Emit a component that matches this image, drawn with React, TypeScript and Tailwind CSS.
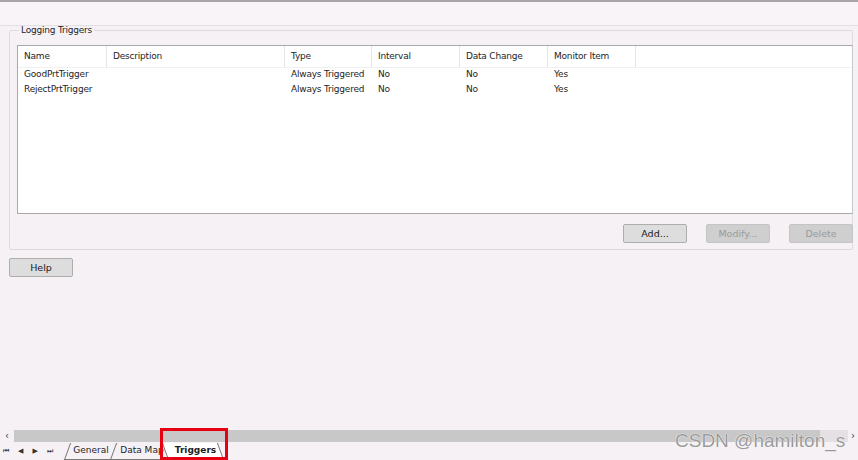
import React from "react";

const columns = [
  { label: "Name", width: "w-[89px]" },
  { label: "Description", width: "w-[178px]" },
  { label: "Type", width: "w-[87px]" },
  { label: "Interval", width: "w-[88px]" },
  { label: "Data Change", width: "w-[88px]" },
  { label: "Monitor Item", width: "w-[88px]" },
];

const rows = [
  ["GoodPrtTrigger", "", "Always Triggered", "No", "No", "Yes"],
  ["RejectPrtTrigger", "", "Always Triggered", "No", "No", "Yes"],
];

function WinButton({ label, disabled }: { label: string; disabled?: boolean }) {
  return (
    <button
      type="button"
      className={
        "w-[64px] h-[19px] border rounded-[2px] text-[9.5px] leading-none " +
        (disabled
          ? "bg-[#cfcfcf] border-[#c4c4c4] text-[#9a9a9a]"
          : "bg-[#dddddd] border-[#adadad] text-[#1a1a1a]")
      }
    >
      {label}
    </button>
  );
}

export default function App() {
  return (
    <div
      className="relative w-[858px] h-[460px] overflow-hidden bg-[#f6f1f5] flex flex-col text-[#1e1e1e]"
      style={{ fontFamily: '"DejaVu Sans", Tahoma, sans-serif' }}
    >
      {/* top edge */}
      <div className="h-[2px] bg-[#a8a6a8]" />
      <div className="h-[24px] bg-[#f8f4f7] border-b border-[#e3dfe3]" />

      {/* Logging Triggers group */}
      <div className="px-[9px] pr-[5px]">
        <fieldset className="border border-[#dedade] rounded-[2px] h-[224px] pl-[7px] pr-0">
          <legend className="ml-[2px] px-[2px] text-[9px] leading-none tracking-[-0.2px]">Logging Triggers</legend>
          <div className="mt-[10px] mr-[-1px] h-[169px] bg-white border border-[#a9a9a9] border-r-[#c8c8c8]">
            <div className="flex h-[22px] border-b border-[#f0f0f0]">
              {columns.map((c) => (
                <div
                  key={c.label}
                  className={c.width + " flex items-center pl-[6px] text-[9px] tracking-[-0.2px] border-r border-[#e5e5e5]"}
                >
                  {c.label}
                </div>
              ))}
            </div>
            <div className="-mt-[1px]">
              {rows.map((r, i) => (
                <div key={i} className="flex h-[15px] items-center">
                  {r.map((cell, j) => (
                    <div key={j} className={columns[j].width + " pl-[6px] text-[9px] tracking-[-0.2px] whitespace-nowrap"}>
                      {cell}
                    </div>
                  ))}
                </div>
              ))}
            </div>
          </div>
          <div className="flex justify-end gap-[19px] mt-[10px] mr-[-1px]">
            <WinButton label="Add..." />
            <WinButton label="Modify..." disabled />
            <WinButton label="Delete" disabled />
          </div>
        </fieldset>
      </div>

      <div className="px-[9px] mt-[4px]">
        <WinButton label="Help" />
      </div>

      <div className="flex-1" />

      {/* horizontal scrollbar */}
      <div className="h-[12px] flex items-center mb-[1px]">
        <span className="w-[14px] text-center text-[10px] leading-none text-[#444]">‹</span>
        <div className="flex-1 h-full bg-[#c8c8c8]" />
        <div className="w-[28px] h-full bg-[#e4e0e4]" />
        <span className="w-[10px] text-center text-[10px] leading-none text-[#444]">›</span>
      </div>

      {/* sheet tabs */}
      <div className="h-[17px] flex items-center text-[9px]">
        <div className="flex items-center gap-[9px] pl-[3px] pr-[14px] text-[7px] text-[#333]">
          <span>⏮</span>
          <span>◀</span>
          <span>▶</span>
          <span>⏭</span>
        </div>
        <div className="flex items-end h-full">
          <div className="h-full flex items-center px-[5px] border-l border-b border-[#777] -skew-x-[20deg]">
            <span className="skew-x-[20deg]">General</span>
          </div>
          <div className="h-full flex items-center pl-[6px] border-l border-b border-[#777] -skew-x-[20deg] w-[52px] overflow-hidden">
            <span className="skew-x-[20deg] whitespace-nowrap">Data Map</span>
          </div>
          <div className="h-full flex items-center pl-[9px] pr-[4px] border-l border-r border-b border-[#777] skew-x-[20deg] bg-white font-bold">
            <span className="-skew-x-[20deg]">Triggers</span>
          </div>
        </div>
      </div>

      {/* highlight box */}
      <div className="absolute left-[160px] top-[428px] w-[68px] h-[32px] border-[3px] border-[#e60012]" />

      {/* watermark */}
      <div
        className="absolute left-[675px] top-[431px] text-[19px] leading-none text-[#9a9a9a]"
        style={{ fontFamily: '"Liberation Sans", Arial, sans-serif', textShadow: "0 0 1px #fff, 0 0 1px #fff" }}
      >
        CSDN @hamilton_s
      </div>
    </div>
  );
}
